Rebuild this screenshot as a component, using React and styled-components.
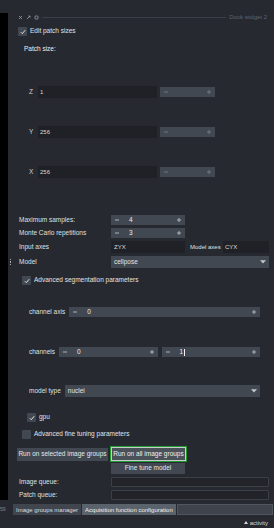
import React from 'react';
import styled, { createGlobalStyle } from 'styled-components';

const GlobalStyle = createGlobalStyle`
  html, body {
    margin: 0;
    padding: 0;
    background: #262930;
  }
  body {
    font-family: "Liberation Sans", Arial, sans-serif;
  }
`;

const Page = styled.div`
  width: 274px;
  height: 528px;
  overflow: hidden;
  background: #262930;
  color: #e2e4e6;
  font-size: 6.5px;
  line-height: 1;
  white-space: nowrap;
  display: flex;
  flex-direction: column;
`;

const TopGap = styled.div`
  height: 13px;
  flex: none;
`;

const Main = styled.div`
  height: 487px;
  flex: none;
  display: flex;
`;

const Canvas = styled.div`
  width: 8px;
  background: #000;
`;

const Splitter = styled.div`
  width: 5px;
  display: flex;
  flex-direction: column;
  align-items: center;
  gap: 1.2px;
  padding-top: 246px;
  box-sizing: border-box;
`;

const Dot = styled.span`
  width: 1.3px;
  height: 1.3px;
  background: #a7acb2;
`;

const Dock = styled.div`
  flex: 1;
  min-width: 0;
  display: flex;
  flex-direction: column;
`;

const TitleBar = styled.div`
  height: 9px;
  display: flex;
  align-items: center;
  padding: 0 7px 0 5px;
  gap: 3px;
`;

const TitleLine = styled.div`
  flex: 1;
  height: 1px;
  background: #3a3f47;
`;

const TitleText = styled.span`
  color: #5d6570;
  font-size: 6px;
`;

const CheckRow = styled.div`
  display: flex;
  align-items: center;
  margin-top: ${(p) => p.$top}px;
  padding-left: ${(p) => p.$left}px;
  height: 9px;
`;

const Box = styled.span`
  width: 9px;
  height: 9px;
  flex: none;
  background: #414851;
  border-radius: 1px;
  display: flex;
  align-items: center;
  justify-content: center;
  margin-right: 3px;
`;

const SectionLabel = styled.div`
  margin-top: 9px;
  height: 8px;
  line-height: 8px;
  padding-left: 11px;
  color: #f0f1f2;
`;

const AxisRow = styled.div`
  display: flex;
  align-items: center;
  height: 12px;
  margin-top: ${(p) => p.$top}px;
  padding-left: 16px;
`;

const AxisName = styled.span`
  width: 9px;
  flex: none;
  color: #cfd2d5;
`;

const LineEdit = styled.div`
  height: ${(p) => p.$h || 12}px;
  width: ${(p) => (p.$w ? `${p.$w}px` : 'auto')};
  flex: ${(p) => (p.$w ? 'none' : 1)};
  background: #1f2126;
  display: flex;
  align-items: center;
  padding-left: ${(p) => p.$pad ?? 3}px;
  box-sizing: border-box;
  color: #d9dbdd;
  font-size: 6px;
`;

const SpinBox = styled.div`
  height: ${(p) => p.$h || 10}px;
  width: ${(p) => (p.$w ? `${p.$w}px` : 'auto')};
  flex: ${(p) => (p.$w ? 'none' : 1)};
  margin-left: ${(p) => p.$ml || 0}px;
  background: #414851;
  display: flex;
  align-items: center;
  padding: 0 4px;
  box-sizing: border-box;
  color: ${(p) => (p.$dim ? '#737a83' : '#b9bdc2')};
`;

const SpinValue = styled.span`
  margin-left: 10px;
  flex: 1;
  color: #eceef0;
  display: flex;
  align-items: center;
`;

const Caret = styled.span`
  width: 1px;
  height: 7px;
  margin-left: 0.5px;
  background: #f0f1f2;
`;

const Form = styled.div`
  display: grid;
  grid-template-columns: 92px 1fr;
  row-gap: 3px;
  align-items: center;
  margin-top: ${(p) => p.$top}px;
  padding: 0 5px 0 6px;
`;

const FieldLabel = styled.span`
  color: #dfe1e3;
  display: flex;
  align-items: center;
`;

const FieldRow = styled.div`
  display: flex;
  align-items: center;
`;

const InlineLabel = styled.span`
  width: 38px;
  flex: none;
  padding-left: 5px;
  box-sizing: border-box;
  color: #dfe1e3;
  font-size: 6px;
`;

const Combo = styled.div`
  flex: 1;
  height: 12px;
  background: #414851;
  display: flex;
  align-items: center;
  justify-content: space-between;
  padding: 0 3px;
  box-sizing: border-box;
  color: #e2e4e6;
`;

const SubRow = styled.div`
  display: flex;
  align-items: center;
  gap: 4px;
  margin-top: ${(p) => p.$top}px;
  padding: 0 14px 0 16px;
`;

const SubLabel = styled.span`
  flex: none;
  color: #dfe1e3;
`;

const ButtonGrid = styled.div`
  display: grid;
  grid-template-columns: 91px 77px;
  grid-template-rows: 16px 12px;
  column-gap: 2px;
  margin-top: 7px;
  padding-left: 4px;
`;

const Button = styled.div`
  height: ${(p) => p.$h || 13}px;
  align-self: center;
  background: #414851;
  display: flex;
  align-items: center;
  justify-content: center;
  color: #e6e8ea;
  box-sizing: border-box;
  margin: ${(p) => p.$m || '0'};
`;

const FocusFrame = styled.div`
  border: 1px solid #1f9e2f;
  display: flex;
  align-items: stretch;
`;

const FocusButton = styled.div`
  flex: 1;
  border: 1px solid #c9cccf;
  background: #4b5159;
  display: flex;
  align-items: center;
  justify-content: center;
  color: #eef0f2;
`;

const Queue = styled.div`
  height: 10px;
  background: #222429;
  border: 1px solid #3b4047;
  border-radius: 1px;
  box-sizing: border-box;
`;

const StatusRow = styled.div`
  height: 17px;
  flex: none;
  display: flex;
  align-items: flex-start;
  padding-top: 4px;
  box-sizing: border-box;
`;

const Coord = styled.div`
  width: 13px;
  height: 11px;
  display: flex;
  align-items: center;
  color: #80868d;
  font-size: 5px;
`;

const TabBar = styled.div`
  flex: 1;
  display: flex;
  gap: 1px;
  height: 11px;
  padding-right: 1px;
`;

const Tab = styled.div`
  height: 11px;
  padding: 0 3px;
  display: flex;
  align-items: center;
  font-size: 6px;
  background: ${(p) => (p.$active ? '#5a626c' : '#41464e')};
  color: ${(p) => (p.$active ? '#eef0f2' : '#dadde0')};
  box-sizing: border-box;
`;

const TabFill = styled.div`
  flex: 1;
  background: #3f444c;
  border: 1px solid #50565f;
  box-sizing: border-box;
`;

const ActivityRow = styled.div`
  height: 11px;
  flex: none;
  display: flex;
  align-items: center;
  justify-content: flex-end;
  padding-right: 6px;
  gap: 2px;
  color: #d6d9dc;
  font-size: 6px;
`;

const Check = () => (
  <svg width="6" height="6" viewBox="0 0 6 6">
    <path d="M0.8 3.2 L2.3 4.7 L5.2 1.2" stroke="#f0f1f2" strokeWidth="0.9" fill="none" />
  </svg>
);

const Minus = () => (
  <svg width="4" height="4" viewBox="0 0 4 4">
    <path d="M0 2 H4" stroke="currentColor" strokeWidth="0.9" />
  </svg>
);

const Plus = () => (
  <svg width="4" height="4" viewBox="0 0 4 4">
    <path d="M0 2 H4 M2 0 V4" stroke="currentColor" strokeWidth="0.9" />
  </svg>
);

const Arrow = () => (
  <svg width="6" height="4" viewBox="0 0 6 4">
    <path d="M0 0.3 H6 L3 3.5 Z" fill="#c4c8cc" />
  </svg>
);

const UpArrow = () => (
  <svg width="4" height="3" viewBox="0 0 4 3">
    <path d="M0 3 H4 L2 0 Z" fill="#d6d9dc" />
  </svg>
);

function Spin({ value, caret, ...rest }) {
  return (
    <SpinBox {...rest}>
      <Minus />
      <SpinValue>
        {value}
        {caret && <Caret />}
      </SpinValue>
      <Plus />
    </SpinBox>
  );
}

function Checked({ top, left, checked = true, label }) {
  return (
    <CheckRow $top={top} $left={left}>
      <Box>{checked && <Check />}</Box>
      <span>{label}</span>
    </CheckRow>
  );
}

function TitleIcons() {
  return (
    <>
      <svg width="5" height="5" viewBox="0 0 5 5">
        <path d="M1 1 L4 4 M4 1 L1 4" stroke="#9aa0a7" strokeWidth="0.8" />
      </svg>
      <svg width="5" height="5" viewBox="0 0 5 5">
        <path d="M1 4 L4 1 M2.4 1 H4 V2.6" stroke="#9aa0a7" strokeWidth="0.8" fill="none" />
      </svg>
      <svg width="5" height="5" viewBox="0 0 5 5">
        <rect x="1" y="1" width="3" height="3" rx="0.6" stroke="#9aa0a7" strokeWidth="0.8" fill="none" />
      </svg>
    </>
  );
}

export default function App() {
  return (
    <Page>
      <GlobalStyle />
      <TopGap />
      <Main>
        <Canvas />
        <Splitter>
          <Dot />
          <Dot />
          <Dot />
        </Splitter>
        <Dock>
          <TitleBar>
            <TitleIcons />
            <TitleLine />
            <TitleText>Dock widget 2</TitleText>
          </TitleBar>

          <Checked top={6} left={5} label="Edit patch sizes" />
          <SectionLabel>Patch size:</SectionLabel>

          {[
            ['Z', '1', 33],
            ['Y', '256', 28],
            ['X', '256', 28],
          ].map(([axis, val, top]) => (
            <AxisRow key={axis} $top={top}>
              <AxisName>{axis}</AxisName>
              <LineEdit $w={119} $pad={2}>{val}</LineEdit>
              <Spin $w={55} $ml={3} $dim />
            </AxisRow>
          ))}

          <Form $top={37}>
            <FieldLabel>Maximum samples:</FieldLabel>
            <Spin $w={74} value="4" />
            <FieldLabel>Monte Carlo repetitions</FieldLabel>
            <Spin $w={74} value="3" />
            <FieldLabel>Input axes</FieldLabel>
            <FieldRow>
              <LineEdit $w={74}>ZYX</LineEdit>
              <InlineLabel>Model axes</InlineLabel>
              <LineEdit $pad={2}>CYX</LineEdit>
            </FieldRow>
            <FieldLabel>Model</FieldLabel>
            <FieldRow>
              <Combo>
                <span>cellpose</span>
                <Arrow />
              </Combo>
            </FieldRow>
          </Form>

          <Checked top={8} left={9} label="Advanced segmentation parameters" />

          <SubRow $top={22}>
            <SubLabel>channel axis</SubLabel>
            <Spin value="0" />
          </SubRow>
          <SubRow $top={30}>
            <SubLabel>channels</SubLabel>
            <Spin value="0" />
            <Spin value="1" caret />
          </SubRow>
          <SubRow $top={28}>
            <SubLabel>model type</SubLabel>
            <Combo>
              <span>nuclei</span>
              <Arrow />
            </Combo>
          </SubRow>

          <Checked top={16} left={14} label="gpu" />
          <Checked top={8} left={9} checked={false} label="Advanced fine tuning parameters" />

          <ButtonGrid>
            <Button>Run on selected image groups</Button>
            <FocusFrame>
              <FocusButton>Run on all image groups</FocusButton>
            </FocusFrame>
            <span />
            <Button $h={11} $m="0 2px 0 1px">Fine tune model</Button>
          </ButtonGrid>

          <Form $top={3}>
            <FieldLabel>Image queue:</FieldLabel>
            <Queue />
            <FieldLabel>Patch queue:</FieldLabel>
            <Queue />
          </Form>
        </Dock>
      </Main>

      <StatusRow>
        <Coord>59</Coord>
        <TabBar>
          <Tab>Image groups manager</Tab>
          <Tab $active>Acquisition function configuration</Tab>
          <TabFill />
        </TabBar>
      </StatusRow>
      <ActivityRow>
        <UpArrow />
        <span>activity</span>
      </ActivityRow>
    </Page>
  );
}
